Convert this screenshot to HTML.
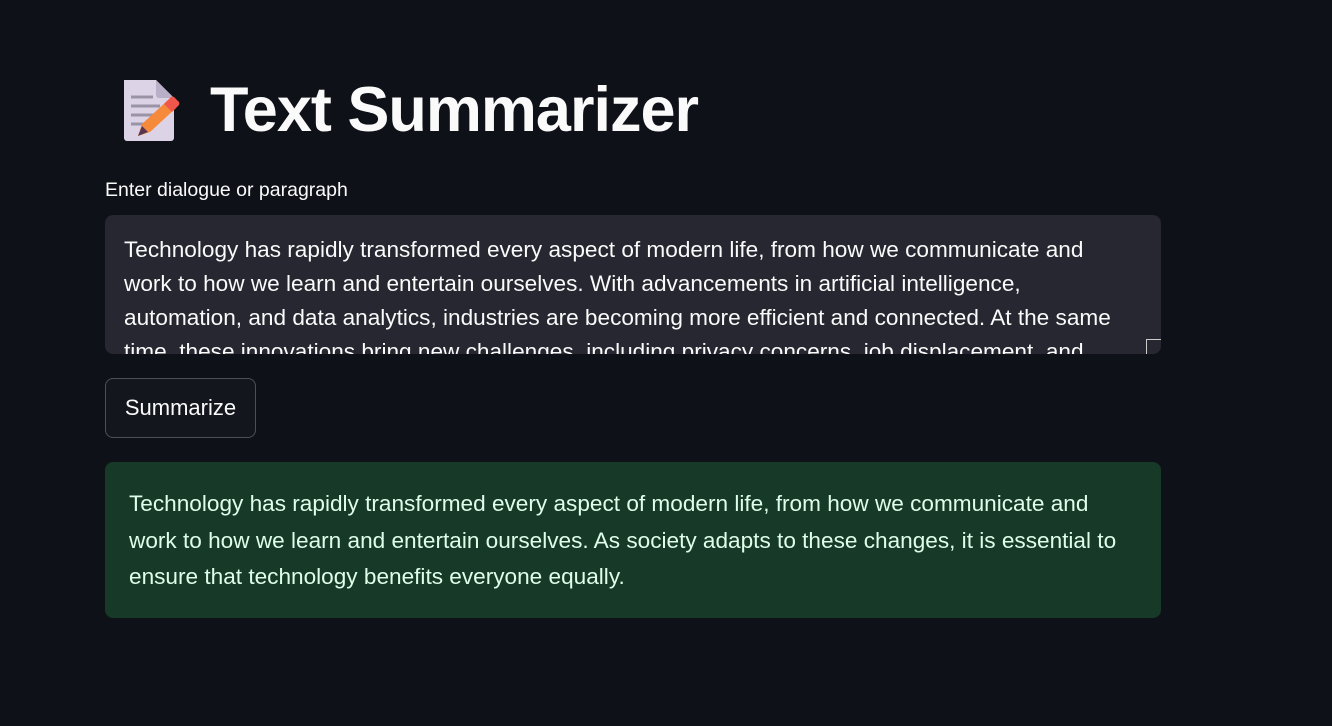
<!DOCTYPE html>
<html><head><meta charset="utf-8"><style>
body{margin:0;background:#0e1117;width:1332px;height:726px;overflow:hidden;font-family:"Liberation Sans",sans-serif;color:#fafafa}
.title{position:absolute;left:120px;top:72px;height:76px;display:flex;align-items:center}
.title h1{margin:0 0 0 26px;font-size:63px;font-weight:bold;letter-spacing:-1px}
.label{position:absolute;left:105px;top:179px;font-size:19.5px;color:#fafafa}
.ta{position:absolute;left:105px;top:215px;width:1056px;height:139px;background:#262730;border-radius:8px;overflow:hidden}
.ta p{margin:0;position:absolute;left:19px;top:18px;width:1030px;white-space:nowrap;font-size:22.6px;line-height:34px;color:#fafafa}
.grip{position:absolute;right:0;bottom:0;width:14px;height:14px;border-left:1px solid #ccc;border-top:1px solid #ccc;background:#262730}
.btn{position:absolute;left:105px;top:378px;width:151px;height:60px;border:1px solid rgba(250,250,250,0.25);border-radius:8px;box-sizing:border-box;font-size:22px;display:flex;align-items:center;justify-content:center;background:#13161d}
.res{position:absolute;left:105px;top:462px;width:1056px;height:156px;background:#173928;border-radius:8px;color:#dffde9}
.res p{margin:0;position:absolute;left:24px;top:24px;width:1030px;white-space:nowrap;font-size:22.6px;line-height:36.5px}
</style></head><body>
<div class="title">
<svg width="64" height="68" viewBox="0 0 64 68">
<path d="M4 4h32l18 18v40a3 3 0 0 1-3 3H7a3 3 0 0 1-3-3z" fill="#dcd3e6"/>
<path d="M36 4l18 18H39a3 3 0 0 1-3-3z" fill="#b9afc6"/>
<g stroke="#9a93a6" stroke-width="3"><line x1="11" y1="21" x2="33" y2="21"/><line x1="11" y1="30" x2="40" y2="30"/><line x1="11" y1="39" x2="40" y2="39"/><line x1="11" y1="48" x2="30" y2="48"/></g>
<path d="M18 60l4-12 26-24 8 8-26 24z" fill="#f58a3a"/>
<path d="M44 28l6-6a3 3 0 0 1 5 0l3 3a3 3 0 0 1 0 5l-6 6z" fill="#f0564a"/>
<path d="M18 60l4-10 6 6z" fill="#5a3550"/>
</svg>
<h1>Text Summarizer</h1></div>
<div class="label">Enter dialogue or paragraph</div>
<div class="ta"><p>Technology has rapidly transformed every aspect of modern life, from how we communicate and<br>work to how we learn and entertain ourselves. With advancements in artificial intelligence,<br>automation, and data analytics, industries are becoming more efficient and connected. At the same<br>time, these innovations bring new challenges, including privacy concerns, job displacement, and</p><div class="grip"></div></div>
<div class="btn">Summarize</div>
<div class="res"><p>Technology has rapidly transformed every aspect of modern life, from how we communicate and<br>work to how we learn and entertain ourselves. As society adapts to these changes, it is essential to<br>ensure that technology benefits everyone equally.</p></div>
</body></html>
